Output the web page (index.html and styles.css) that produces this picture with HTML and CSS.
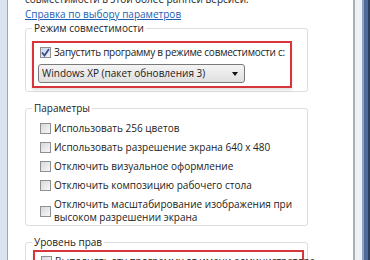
FILE: index.html
```html
<!DOCTYPE html>
<html lang="ru">
<head>
    <meta charset="UTF-8">
    <title>Совместимость</title>
    <link rel="stylesheet" href="styles.css">
</head>
<body>
    <div class="frame-left"></div>

    <div class="content">
        <p class="intro">совместимости в этой более ранней версией.</p>
        <a class="help-link" href="#">Справка по выбору параметров</a>

        <!-- Режим совместимости -->
        <fieldset class="group">
            <legend>Режим совместимости</legend>
            <div class="highlight">
                <label class="row tight">
                    <span class="check checked">
                        <svg width="9" height="9" viewBox="0 0 9 9"><path d="M1 4.5 L3.5 7.5 L8 1" fill="none" stroke="#3b4f86" stroke-width="1.8"/></svg>
                    </span>
                    Запустить программу в режиме совместимости с:
                </label>
                <div class="select">
                    <span>Windows XP (пакет обновления 3)</span>
                    <span class="arrow"></span>
                </div>
            </div>
        </fieldset>

        <!-- Параметры -->
        <fieldset class="group params">
            <legend>Параметры</legend>
            <label class="row"><span class="check"></span>Использовать 256 цветов</label>
            <label class="row"><span class="check"></span>Использовать разрешение экрана 640 x 480</label>
            <label class="row"><span class="check"></span>Отключить визуальное оформление</label>
            <label class="row"><span class="check"></span>Отключить композицию рабочего стола</label>
            <label class="row"><span class="check"></span>Отключить масштабирование изображения при<br>высоком разрешении экрана</label>
        </fieldset>

        <!-- Уровень прав -->
        <fieldset class="group">
            <legend>Уровень прав</legend>
            <div class="highlight rights">
                <label class="row"><span class="check"></span>Выполнять эту программу от имени администратора</label>
            </div>
        </fieldset>
    </div>

    <div class="frame-right"></div>
</body>
</html>
```

FILE: styles.css
```css
body {
    margin: 0;
    width: 370px;
    height: 260px;
    overflow: hidden;
    display: flex;
    font-family: 'Open Sans', 'Liberation Sans', sans-serif;
    font-size: 10px;
    color: #222;
    background: #fff;
}

.frame-left {
    flex: 0 0 7px;
    background: #dbe4ee;
    border-right: 1px solid #9ca7b3;
}

.frame-right {
    flex: 1;
    background: linear-gradient(to right, #eef1f5 0, #eef1f5 7px, #91a1b9 7px, #91a1b9 9px, #4f6b9b 9px, #4f6b9b 13px, #2d3f5e 13px);
}

.content {
    flex: 0 0 328px;
    background: #fff;
    border-right: 2px solid #a7afb8;
    padding-left: 17px;
    line-height: 15px;
}

.intro {
    margin: -8px 0 0;
}

.help-link {
    display: block;
    color: #1a5fb4;
    text-decoration: underline;
}

.group {
    box-sizing: border-box;
    width: 283px;
    margin: -1px 0 0;
    padding: 0 0 3px 6px;
    border: 1px solid #dadfe3;
    border-radius: 3px;
}

.group legend {
    padding: 0 2px;
    margin-left: 0;
}

.group + .group {
    margin-top: 9px;
}

.highlight {
    box-sizing: border-box;
    width: 260px;
    margin-top: 5px;
    padding: 2px 4px 3px 4px;
    border: 2px solid #d8353b;
    box-shadow: 0 2px 3px rgba(0, 0, 0, 0.12);
}

.row {
    display: flex;
    align-items: center;
    gap: 3px;
    line-height: 13px;
    white-space: nowrap;
}

.highlight .row {
    margin-left: 2px;
    line-height: 15px;
}

.tight {
    letter-spacing: -0.25px;
}

.check {
    flex: 0 0 auto;
    box-sizing: border-box;
    width: 11px;
    height: 11px;
    border: 1px solid #8e9094;
    background: linear-gradient(135deg, #d6d8da, #f7f7f7);
    display: flex;
    align-items: center;
    justify-content: center;
}

.check.checked {
    background: linear-gradient(135deg, #c9d6e6, #f2f5f9);
}

.select {
    box-sizing: border-box;
    width: 207px;
    height: 19px;
    margin-top: 4px;
    padding: 0 6px 0 3px;
    border: 1px solid #7a7a7a;
    border-radius: 3px;
    background: linear-gradient(#f4f4f4, #e0e0e0);
    display: flex;
    align-items: center;
    justify-content: space-between;
}

.arrow {
    width: 0;
    height: 0;
    border-left: 3px solid transparent;
    border-right: 3px solid transparent;
    border-top: 4px solid #111;
}

.params {
    padding-bottom: 1px;
}

.params .row {
    margin: 6px 0 0 8px;
}

.params legend + .row {
    margin-top: 6px;
}

.rights {
    width: 271px;
    margin: 0 0 0 1px;
}
```
